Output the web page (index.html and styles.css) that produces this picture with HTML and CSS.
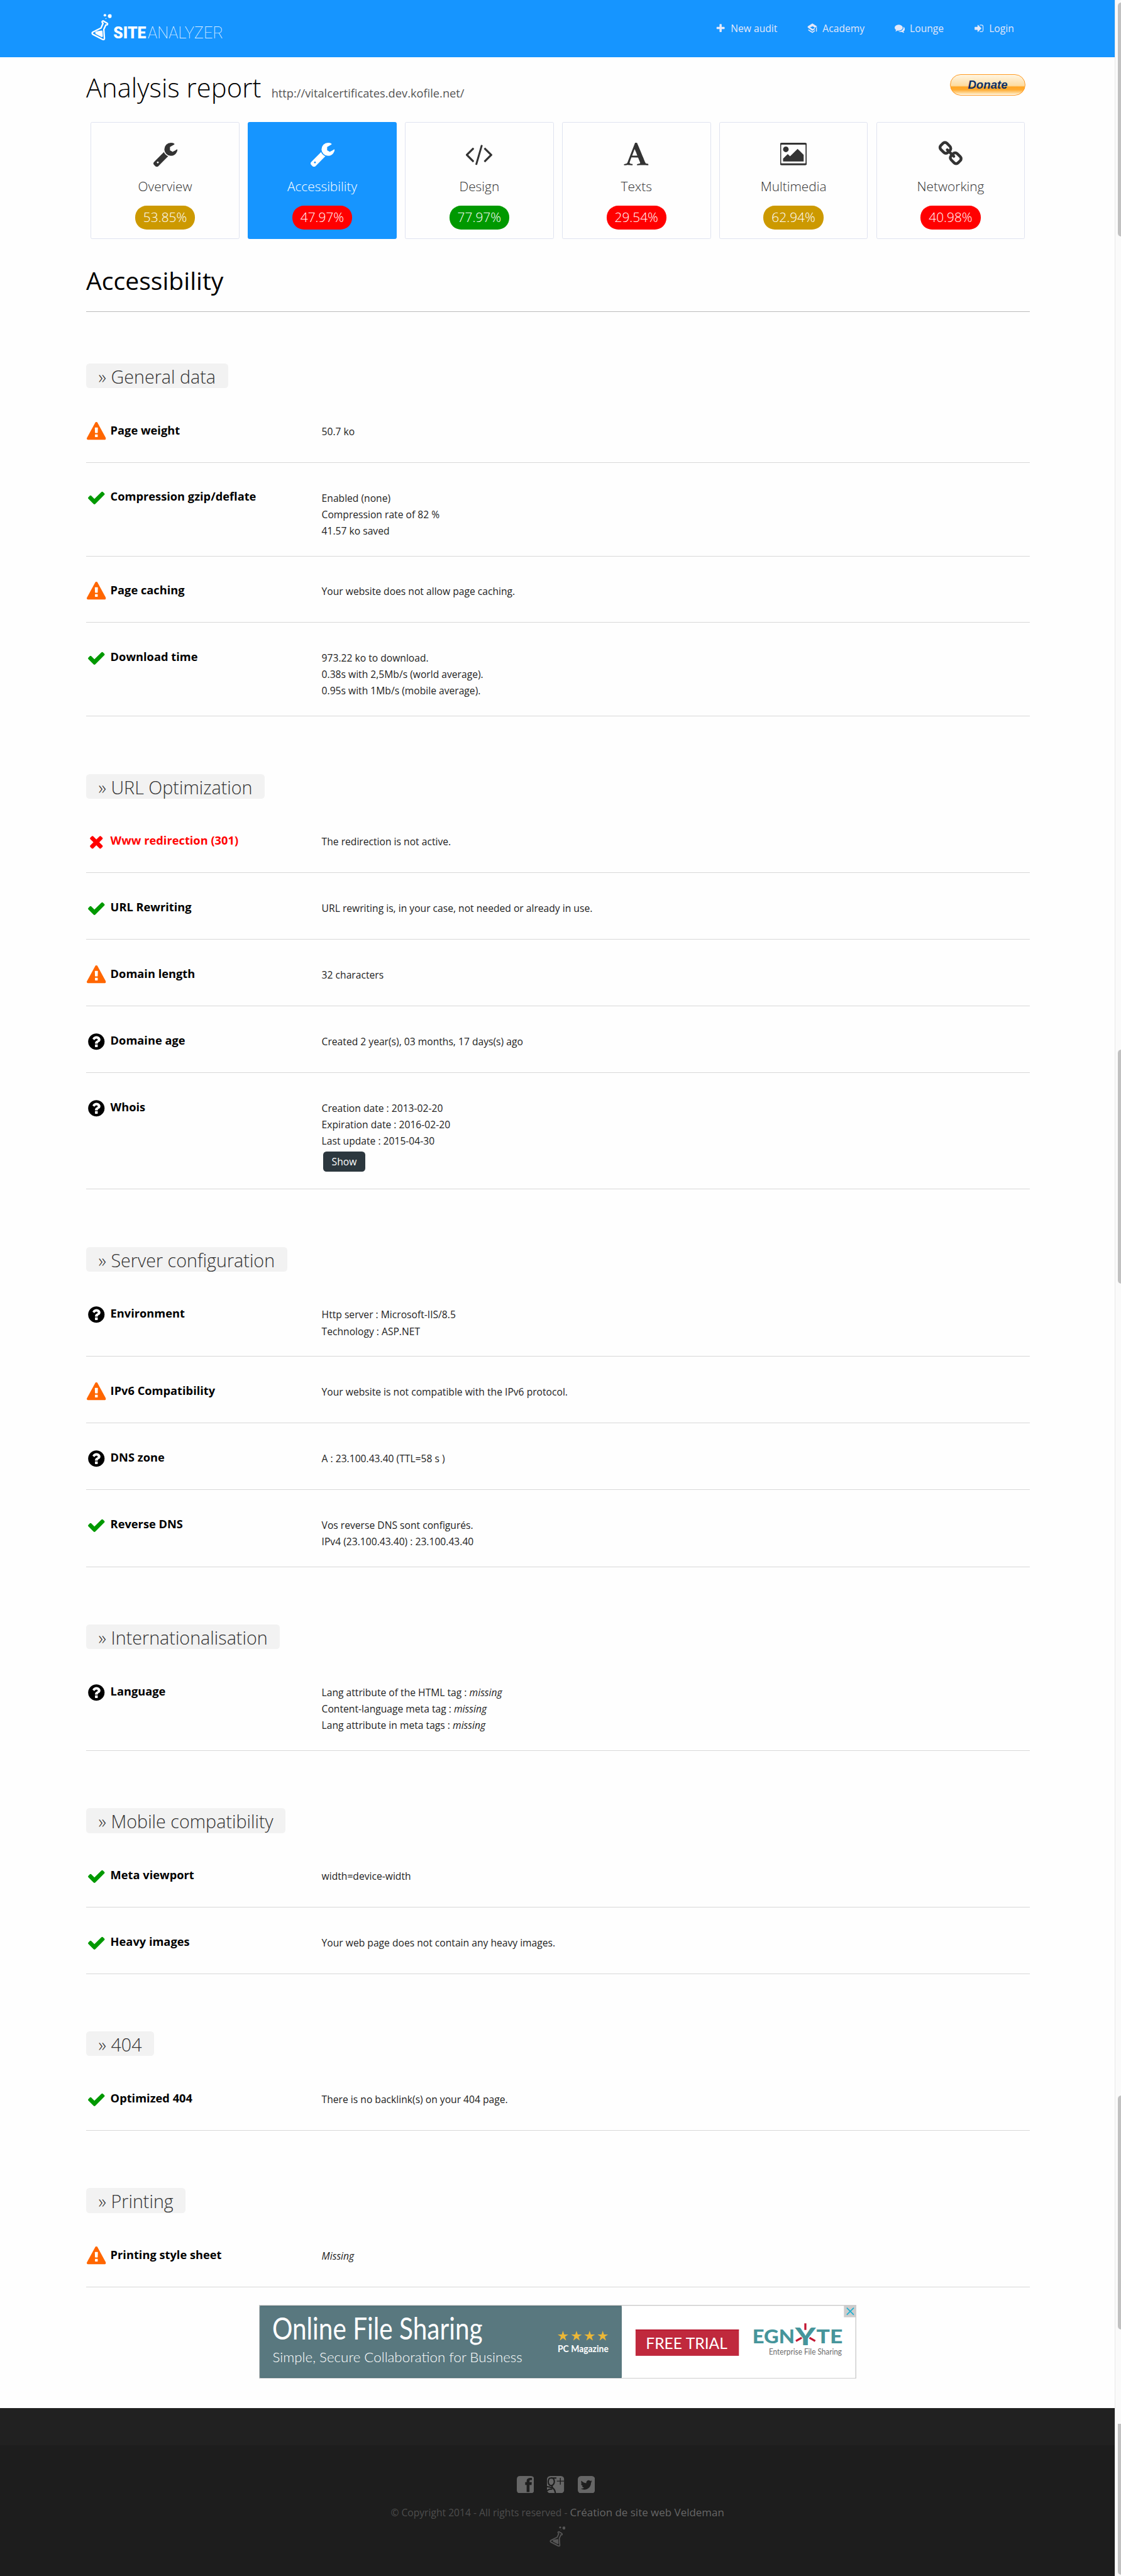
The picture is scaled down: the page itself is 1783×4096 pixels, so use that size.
FILE: index.html
```html
<!DOCTYPE html>
<html lang="en">
<head>
<meta charset="utf-8">
<title>Site Analyzer - Accessibility</title>
<link rel="stylesheet" href="styles.css">
</head>
<body>
<svg class="sprite" aria-hidden="true">
  <symbol id="wrench" viewBox="0 0 1792 1792"><path d="M448 1472q0-26-19-45t-45-19-45 19-19 45 19 45 45 19 45-19 19-45zm644-420l-682 682q-37 37-90 37-52 0-91-37l-106-108q-38-36-38-90 0-53 38-91l681-681q39 98 114.500 173.500t173.500 114.500zm634-435q0 39-23 106-47 134-164.500 217.500t-258.500 83.500q-185 0-316.500-131.500t-131.500-316.500 131.500-316.500 316.500-131.500q58 0 121.500 16.500t107.500 46.500q16 11 16 28t-16 28l-293 169v224l193 107q5-3 79-48.500t135.500-81 70.500-35.500q15 0 23.500 10t8.500 25z"/></symbol>
  <symbol id="code" viewBox="0 0 1792 1792" overflow="visible"><path d="M553 1399l-50 50q-10 10-23 10t-23-10l-466-466q-10-10-10-23t10-23l466-466q10-10 23-10t23 10l50 50q10 10 10 23t-10 23l-393 393 393 393q10 10 10 23t-10 23zm591-1067l-373 1291q-4 13-15.500 19.500t-23.500 2.500l-62-17q-13-4-19.500-15.500t-2.500-24.500l373-1291q4-13 15.500-19.500t23.500-2.500l62 17q13 4 19.500 15.500t2.500 24.500zm657 651l-466 466q-10 10-23 10t-23-10l-50-50q-10-10-10-23t10-23l393-393-393-393q-10-10-10-23t10-23l50-50q10-10 23-10t23 10l466 466q10 10 10 23t-10 23z"/></symbol>
  <symbol id="font" viewBox="0 0 1792 1792"><path d="M789 559l-170 450q33 0 136.500 2t160.500 2q19 0 57-2-87-253-184-452zm-725 1105l2-79q23-7 56-12.500t57-10.500 49.500-14.500 44.500-29 31-50.500l237-616 280-724h128q8 14 11 21l205 480q33 78 106 257.500t114 274.500q15 34 58 144.500t72 168.500q20 45 35 57 19 15 88 29.500t84 20.500q6 38 6 57 0 4-.5 13t-.5 13q-63 0-190-8t-191-8q-76 0-215 7t-178 8q0-43 4-78l131-28q1 0 12.500-2.500t15.500-3.500 14.500-4.500 15-6.500 11-8 9-11 2.500-14q0-16-31-96.500t-72-177.500-42-100l-450-2q-26 58-76.500 195.500t-50.500 162.500q0 22 14 37.500t43.500 24.500 48.500 13.500 57 8.500 41 4q1 19 1 58 0 9-2 27-58 0-174.500-10t-174.500-10q-8 0-26.500 4t-21.500 4q-80 14-188 14z"/></symbol>
  <symbol id="picture" viewBox="0 0 1792 1792" overflow="visible"><path d="M576 576q0 80-56 136t-136 56-136-56-56-136 56-136 136-56 136 56 56 136zm1024 384v448h-1408v-192l320-320 160 160 512-512zm96-704h-1600q-13 0-22.500 9.500t-9.500 22.500v1216q0 13 9.500 22.500t22.500 9.500h1600q13 0 22.500-9.500t9.500-22.500v-1216q0-13-9.500-22.500t-22.500-9.500zm160 32v1216q0 66-47 113t-113 47h-1600q-66 0-113-47t-47-113v-1216q0-66 47-113t113-47h1600q66 0 113 47t47 113z"/></symbol>
  <symbol id="link" viewBox="0 0 1792 1792"><path d="M1520 1216q0-40-28-68l-208-208q-28-28-68-28-42 0-72 32 3 3 19 18.500t21.500 21.500 15 19 13 25.500 3.500 27.500q0 40-28 68t-68 28q-15 0-27.500-3.500t-25.500-13-19-15-21.500-21.500-18.500-19q-33 31-33 73 0 40 28 68l206 207q27 27 68 27 40 0 68-26l147-146q28-28 28-67zm-703-705q0-40-28-68l-206-207q-28-28-68-28-39 0-68 27l-147 146q-28 28-28 67 0 40 28 68l208 208q27 27 68 27 42 0 72-31-3-3-19-18.500t-21.500-21.500-15-19-13-25.500-3.500-27.500q0-40 28-68t68-28q15 0 27.500 3.500t25.500 13 19 15 21.500 21.500 18.500 19q33-31 33-73zm895 705q0 120-85 203l-147 146q-83 83-203 83-121 0-204-85l-206-207q-83-83-83-203 0-123 88-209l-88-88q-86 88-208 88-120 0-204-84l-208-208q-84-84-84-204t85-203l147-146q83-83 203-83 121 0 204 85l206 207q83 83 83 203 0 123-88 209l88 88q86-88 208-88 120 0 204 84l208 208q84 84 84 204z"/></symbol>
  <symbol id="plus" viewBox="0 0 1792 1792"><path d="M1600 736v192q0 40-28 68t-68 28h-416v416q0 40-28 68t-68 28h-192q-40 0-68-28t-28-68v-416h-416q-40 0-68-28t-28-68v-192q0-40 28-68t68-28h416v-416q0-40 28-68t68-28h192q40 0 68 28t28 68v416h416q40 0 68 28t28 68z"/></symbol>
  <symbol id="academy" viewBox="0 0 48 48"><path d="M24 1L46 15 36 21 26 14 13 19 26 27 35 21 36 27 24 35 2 20V15z"/><path d="M5 28L24 40 36 32V37L24 46 5 34zM41 20L45 18V38L41 40z"/></symbol>
  <symbol id="comments" viewBox="0 0 1792 1792"><path d="M1408 768q0 139-94 257t-256.500 186.500-353.500 68.500q-86 0-176-16-124 88-278 128-36 9-86 16h-3q-11 0-20.500-8t-11.500-21q-1-3-1-6.500t.5-6.500 2-6l2.500-5 3.500-5.500 4-5 4.500-5 4-4.500q5-6 23-25t26-29.500 22.500-29 25-38.500 20.500-44q-124-72-195-177t-71-224q0-139 94-257t256.500-186.500 353.500-68.500 353.500 68.500 256.500 186.500 94 257zm384 256q0 120-71 224.500t-195 176.500q10 24 20.500 44t25 38.500 22.500 29 26 29.500 23 25q1 1 4 4.500t4.500 5 4 5 3.500 5.500l2.500 5 2 6 .5 6.500-1 6.500q-3 14-13 22t-22 7q-50-7-86-16-154-40-278-128-90 16-176 16-271 0-472-132 58 4 88 4 161 0 309-45t264-129q125-92 192-212t67-254q0-77-23-152 129 71 204 178t75 230z"/></symbol>
  <symbol id="signin" viewBox="0 0 1792 1792"><path d="M1312 896q0 26-19 45l-544 544q-19 19-45 19t-45-19-19-45v-288h-448q-26 0-45-19t-19-45v-384q0-26 19-45t45-19h448v-288q0-26 19-45t45-19 45 19l544 544q19 19 19 45zm352-352v704q0 119-84.500 203.500t-203.500 84.500h-320q-13 0-22.500-9.500t-9.500-22.500q0-4-1-20t-.5-26.500 3-23.500 10-19.500 20.500-6.500h320q66 0 113-47t47-113v-704q0-66-47-113t-113-47h-312l-11.500-1-11.500-3-8-5.500-7-9-2-13.500q0-4-1-20t-.5-26.500 3-23.500 10-19.500 20.500-6.500h320q119 0 203.500 84.500t84.500 203.500z"/></symbol>
  <symbol id="warn" viewBox="0 0 1792 1792"><path d="M1024 1375v-190q0-14-9.500-23.500t-22.500-9.500h-192q-13 0-22.500 9.500t-9.500 23.500v190q0 14 9.500 23.500t22.500 9.500h192q13 0 22.500-9.500t9.500-23.500zm-2-374l18-459q0-12-10-19-13-11-24-11h-220q-11 0-24 11-10 7-10 21l17 457q0 10 10 16.500t24 6.500h185q14 0 23.500-6.500t10.500-16.500zm-14-934l768 1408q35 63-2 126-17 29-46.500 46t-63.500 17h-1536q-34 0-63.500-17t-46.500-46q-37-63-2-126l768-1408q17-31 47-49t65-18 65 18 47 49z"/></symbol>
  <symbol id="ok" viewBox="0 0 1792 1792"><path d="M1671 566q0 40-28 68l-724 724-136 136q-28 28-68 28t-68-28l-136-136-362-362q-28-28-28-68t28-68l136-136q28-28 68-28t68 28l294 295 656-657q28-28 68-28t68 28l136 136q28 28 28 68z"/></symbol>
  <symbol id="bad" viewBox="0 0 1792 1792"><path d="M1490 1322q0 40-28 68l-136 136q-28 28-68 28t-68-28l-294-294-294 294q-28 28-68 28t-68-28l-136-136q-28-28-28-68t28-68l294-294-294-294q-28-28-28-68t28-68l136-136q28-28 68-28t68 28l294 294 294-294q28-28 68-28t68 28l136 136q28 28 28 68t-28 68l-294 294 294 294q28 28 28 68z"/></symbol>
  <symbol id="info" viewBox="0 0 1792 1792"><path d="M1024 1376v-192q0-14-9-23t-23-9h-192q-14 0-23 9t-9 23v192q0 14 9 23t23 9h192q14 0 23-9t9-23zm256-672q0-88-55.500-163t-138.500-116-170-41q-243 0-371 213-15 24 8 42l132 100q7 6 19 6 16 0 25-12 53-68 86-92 34-24 86-24 48 0 85.500 26t37.500 59q0 38-20 61t-68 45q-63 28-115.500 86.500t-52.500 125.500v36q0 14 9 23t23 9h192q14 0 23-9t9-23q0-19 21.500-49.500t54.500-49.500q32-18 49-28.500t46-35 44.500-48 28-60.500 12.500-81zm384 192q0 209-103 385.500t-279.500 279.500-385.500 103-385.500-103-279.500-279.500-103-385.500 103-385.500 279.500-279.500 385.500-103 385.500 103 279.500 279.500 103 385.500z"/></symbol>
  <symbol id="flask" viewBox="222 33 50 65">
    <path fill="none" stroke="currentColor" stroke-width="3.6" stroke-linejoin="round" stroke-linecap="round" d="M249.500 55L248.500 52.500Q249.500 49.500 252 50.500L260.500 55.500Q262.800 57 261.500 59.500L258.800 60M251 56L246 67.500 226 77.500Q222.500 80 226 83L250 95.500Q254.500 97 254.300 92.500L252.800 71 257.800 60"/>
    <path d="M233 76.500Q240 74 248.500 73.500 249.500 74 249.700 76L250.300 87Q250 90.500 247 89.200L233 82Q230.500 79 233 76.500z"/>
    <circle cx="255.500" cy="36.500" r="3.200"/><circle cx="267.500" cy="38.500" r="4.800"/><circle cx="258" cy="44.500" r="1.200"/>
  </symbol>
  <symbol id="facebook" viewBox="0 0 42 42"><path d="M8 0H34Q42 0 42 8V34Q42 42 34 42H8Q0 42 0 34V8Q0 0 8 0zM24 39H31V22H36L36.500 15H31V12Q31 10 33.500 10H37V4.500H32.500Q24 5 24 12V15H20.500V22H24z" fill-rule="evenodd"/></symbol>
  <symbol id="gplus" viewBox="0 0 42 42"><rect width="42" height="42" rx="8"/><g fill="none" stroke="#1d1d1d"><path stroke-width="2.200" d="M32.500 4.500V21M24 12.500H42"/><path stroke-width="3.200" d="M9 5Q17 3 18 14 17 23 10 23.500 3 22 3 13 4 5 9 5zM10 5H23M13 23Q11 27 15 30 20 34 20.500 42M0 26Q7 26 12 29M0 36Q5 31 13 32"/></g></symbol>
  <symbol id="twitter" viewBox="128 128 1536 1536"><path d="M1408 610q-56 25-121 34 68-40 93-117-65 38-134 51-61-66-153-66-87 0-148.500 61.500t-61.500 148.500q0 29 5 48-129-7-242-65t-192-155q-29 50-29 106 0 114 91 175-47-1-100-26v2q0 75 50 133.500t123 72.500q-29 8-51 8-13 0-39-4 21 63 74.500 104t121.500 42q-116 90-261 90-26 0-50-3 148 94 322 94 112 0 210-35.500t168-95 120.500-137 75-162 24.500-168.500q0-18-1-27 63-45 105-109zm256-194v960q0 119-84.500 203.500t-203.500 84.500h-960q-119 0-203.500-84.500t-84.500-203.500v-960q0-119 84.500-203.500t203.500-84.500h960q119 0 203.500 84.500t84.500 203.500z"/></symbol>
  <symbol id="star" viewBox="0 0 26 24"><path d="M13 0l3 9h10l-8 5.500 3 9.500-8-6-8 6 3-9.500L0 9h10z"/></symbol>
</svg>

<div class="shell">
<div class="page">
  <header class="topbar">
    <svg class="logo" viewBox="222 33 330 65">
      <use href="#flask" x="222" y="33" width="50" height="65"/>
      <text class="logo-bold" x="276" y="93" textLength="80" lengthAdjust="spacingAndGlyphs">SITE</text>
      <text class="logo-thin" x="360" y="93" textLength="184" lengthAdjust="spacingAndGlyphs">ANALYZER</text>
    </svg>
    <nav class="nav">
      <a><svg><use href="#plus"/></svg>New audit</a>
      <a><svg><use href="#academy"/></svg>Academy</a>
      <a><svg><use href="#comments"/></svg>Lounge</a>
      <a><svg><use href="#signin"/></svg>Login</a>
    </nav>
  </header>

  <main class="content">
    <div class="title">
      <h1>Analysis report</h1>
      <span class="url">http://vitalcertificates.dev.kofile.net/</span>
      <button class="donate">Donate</button>
    </div>

    <div class="tabs">
      <a class="tab"><svg><use href="#wrench"/></svg><span class="name">Overview</span><span class="score mid">53.85%</span></a>
      <a class="tab active"><svg><use href="#wrench"/></svg><span class="name">Accessibility</span><span class="score low">47.97%</span></a>
      <a class="tab"><svg><use href="#code"/></svg><span class="name">Design</span><span class="score high">77.97%</span></a>
      <a class="tab"><svg><use href="#font"/></svg><span class="name">Texts</span><span class="score low">29.54%</span></a>
      <a class="tab"><svg><use href="#picture"/></svg><span class="name">Multimedia</span><span class="score mid">62.94%</span></a>
      <a class="tab"><svg><use href="#link"/></svg><span class="name">Networking</span><span class="score low">40.98%</span></a>
    </div>

    <h2>Accessibility</h2>

    <section>
      <h3>» General data</h3>
      <div class="row"><svg class="warn"><use href="#warn"/></svg><h4>Page weight</h4><p>50.7 ko</p></div>
      <div class="row"><svg class="ok"><use href="#ok"/></svg><h4>Compression gzip/deflate</h4><p>Enabled (none)<br>Compression rate of 82 %<br>41.57 ko saved</p></div>
      <div class="row"><svg class="warn"><use href="#warn"/></svg><h4>Page caching</h4><p>Your website does not allow page caching.</p></div>
      <div class="row"><svg class="ok"><use href="#ok"/></svg><h4>Download time</h4><p>973.22 ko to download.<br>0.38s with 2,5Mb/s (world average).<br>0.95s with 1Mb/s (mobile average).</p></div>
    </section>

    <section>
      <h3>» URL Optimization</h3>
      <div class="row"><svg class="bad"><use href="#bad"/></svg><h4 class="bad">Www redirection (301)</h4><p>The redirection is not active.</p></div>
      <div class="row"><svg class="ok"><use href="#ok"/></svg><h4>URL Rewriting</h4><p>URL rewriting is, in your case, not needed or already in use.</p></div>
      <div class="row"><svg class="warn"><use href="#warn"/></svg><h4>Domain length</h4><p>32 characters</p></div>
      <div class="row"><svg><use href="#info"/></svg><h4>Domaine age</h4><p>Created 2 year(s), 03 months, 17 days(s) ago</p></div>
      <div class="row"><svg><use href="#info"/></svg><h4>Whois</h4><div><p>Creation date : 2013-02-20<br>Expiration date : 2016-02-20<br>Last update : 2015-04-30</p><button class="show">Show</button></div></div>
    </section>

    <section>
      <h3>» Server configuration</h3>
      <div class="row"><svg><use href="#info"/></svg><h4>Environment</h4><p>Http server : Microsoft-IIS/8.5<br>Technology : ASP.NET</p></div>
      <div class="row"><svg class="warn"><use href="#warn"/></svg><h4>IPv6 Compatibility</h4><p>Your website is not compatible with the IPv6 protocol.</p></div>
      <div class="row"><svg><use href="#info"/></svg><h4>DNS zone</h4><p>A : 23.100.43.40 (TTL=58 s )</p></div>
      <div class="row"><svg class="ok"><use href="#ok"/></svg><h4>Reverse DNS</h4><p>Vos reverse DNS sont configurés.<br>IPv4 (23.100.43.40) : 23.100.43.40</p></div>
    </section>

    <section>
      <h3>» Internationalisation</h3>
      <div class="row"><svg><use href="#info"/></svg><h4>Language</h4><p>Lang attribute of the HTML tag : <i>missing</i><br>Content-language meta tag : <i>missing</i><br>Lang attribute in meta tags : <i>missing</i></p></div>
    </section>

    <section>
      <h3>» Mobile compatibility</h3>
      <div class="row"><svg class="ok"><use href="#ok"/></svg><h4>Meta viewport</h4><p>width=device-width</p></div>
      <div class="row"><svg class="ok"><use href="#ok"/></svg><h4>Heavy images</h4><p>Your web page does not contain any heavy images.</p></div>
    </section>

    <section>
      <h3>» 404</h3>
      <div class="row"><svg class="ok"><use href="#ok"/></svg><h4>Optimized 404</h4><p>There is no backlink(s) on your 404 page.</p></div>
    </section>

    <section>
      <h3>» Printing</h3>
      <div class="row"><svg class="warn"><use href="#warn"/></svg><h4>Printing style sheet</h4><p><i>Missing</i></p></div>
    </section>

    <svg class="banner" viewBox="0 0 1456 180">
      <rect width="1456" height="180" fill="#c8c8c8"/>
      <rect x="884" y="2" width="570" height="176" fill="#fff"/>
      <rect x="2" y="2" width="882" height="176" fill="#4a6b73"/>
      <rect x="2" y="5" width="882" height="171" fill="#59787f"/>
      <g font-family="Lato, sans-serif">
        <text x="32" y="85" font-size="73" fill="#fff" textLength="513" lengthAdjust="spacingAndGlyphs">Online File Sharing</text>
        <text x="33" y="140" font-size="34" font-weight="300" fill="#fff" textLength="609" lengthAdjust="spacingAndGlyphs">Simple, Secure Collaboration for Business</text>
        <text x="728" y="115" font-size="24" font-weight="700" fill="#fff" textLength="124" lengthAdjust="spacingAndGlyphs">PC Magazine</text>
        <rect x="918" y="60" width="252" height="64" fill="#c0293d"/>
        <rect x="918" y="60" width="252" height="2" fill="#b5122a"/>
        <text x="943" y="107" font-size="39" fill="#fff" textLength="199" lengthAdjust="spacingAndGlyphs">FREE TRIAL</text>
        <g fill="#46959b" font-weight="900">
          <text x="1203" y="94" font-size="47" textLength="103" lengthAdjust="spacingAndGlyphs">EGN</text>
          <text x="1307" y="98" font-size="59" textLength="50" lengthAdjust="spacingAndGlyphs">Y</text>
          <text x="1359" y="94" font-size="47" textLength="64" lengthAdjust="spacingAndGlyphs">TE</text>
        </g>
        <text x="1243" y="121" font-size="20" fill="#6d6d6d" textLength="178" lengthAdjust="spacingAndGlyphs">Enterprise File Sharing</text>
      </g>
      <path d="M1332 45V61M1309 88L1323 80M1342 80L1356 88" stroke="#c21531" stroke-width="5"/>
      <g fill="#ebb737"><use href="#star" x="728" y="63" width="26" height="24"/><use href="#star" x="761" y="63" width="26" height="24"/><use href="#star" x="793" y="63" width="26" height="24"/><use href="#star" x="825" y="63" width="26" height="24"/></g>
      <rect x="1426" width="30" height="30" fill="#ccc"/>
      <path d="M1433 7L1450 24M1450 7L1433 24" stroke="#19b0d2" stroke-width="2.500"/>
    </svg>
  </main>

  <footer class="footer">
    <div class="strip"></div>
    <div class="social"><svg><use href="#facebook"/></svg><svg><use href="#gplus"/></svg><svg><use href="#twitter"/></svg></div>
    <p class="copy">© Copyright 2014 - All rights reserved - <a>Création de site web Veldeman</a></p>
    <svg class="mark"><use href="#flask"/></svg>
  </footer>
</div>

<aside class="scrollbar">
  <i class="thumb first"></i><i class="thumb second"></i><i class="thumb third"></i><i class="thumb last"></i>
</aside>
</div>
</body>
</html>
```

FILE: styles.css
```css
/* 1rem is ten layout units; the whole page scales from here */
html { font-size: 13.048px; }
* { box-sizing: border-box; margin: 0; padding: 0; }
body {
  font-family: "Open Sans", sans-serif;
  background: #fefefe;
  color: #222;
  font-size: 1.2rem;
}
svg { display: block; fill: currentColor; flex: none; }
.sprite { position: absolute; width: 0; height: 0; }
.shell { display: flex; height: 4096px; overflow: hidden; }
.page { width: 135.9rem; display: flex; flex-direction: column; flex: none; }

.topbar {
  height: 7rem;
  background: #1695ff;
  display: flex;
  justify-content: space-between;
  align-items: flex-start;
  padding: 0 12.3rem 0 11.1rem;
}
.logo { width: 16.5rem; height: 3.25rem; margin-top: 1.65rem; color: #fff; overflow: visible; }
.logo-bold { font: 900 40px Roboto, sans-serif; }
.logo-thin { font: 100 40px Roboto, sans-serif; }
.nav { display: flex; gap: 3.67rem; margin-top: 2.45rem; color: #e3e7f8; line-height: 2rem; }
.nav a { display: flex; align-items: center; gap: .6rem; }
.nav svg { width: 1.25rem; height: 1.25rem; }

.content { padding: 0 10.4rem 0 10.5rem; display: flex; flex-direction: column; }
.title { height: 7.9rem; display: flex; align-items: baseline; padding-top: 1.45rem; }
h1 { font-weight: 300; font-size: 3.2rem; line-height: 4.4rem; color: #000; }
.url { font-size: 1.4rem; color: #555; margin-left: 1.25rem; }
.donate {
  align-self: flex-start;
  margin: .6rem .5rem 0 auto;
  width: 9.2rem;
  height: 2.6rem;
  border: 1px solid #ff9a22;
  border-radius: 1.3rem;
  background: linear-gradient(#fff5e2 0, #fddca0 54%, #ffa726 60%, #ffab30 74%, #ffe3b0 94%, #fff 100%);
  font: italic bold 1.43rem "Liberation Sans", sans-serif;
  color: #0a2f66;
}

.tabs { display: grid; grid-template-columns: repeat(6, 1fr); gap: 1rem; padding: 0 .55rem; }
.tab {
  height: 14.2rem;
  border: 1px solid #dfe3f0;
  border-radius: .2rem;
  display: flex;
  flex-direction: column;
  align-items: center;
  color: #333;
  font-weight: 300;
  font-size: 1.6rem;
  padding-top: 2.17rem;
}
.tab.active { background: #1695ff; border-color: #1695ff; color: #fff; }
.tab svg { width: 3.2rem; height: 3.2rem; }
.name { line-height: 2.2rem; margin-top: 1.23rem; }
.score {
  margin-top: 1.3rem;
  width: 7.3rem;
  height: 2.9rem;
  line-height: 2.9rem;
  border-radius: 1.4rem;
  text-align: center;
  color: #fff;
}
.mid { background: #c90; }
.low { background: #f00; }
.high { background: #090; }

h2 {
  height: 8.9rem;
  border-bottom: 1px solid #bbb;
  font-weight: 400;
  font-size: 3rem;
  line-height: 4rem;
  padding-top: 3.08rem;
  color: #000;
}

section { padding-top: 7rem; }
h2 + section { padding-top: 6.3rem; }
h3 {
  width: fit-content;
  height: 3rem;
  margin-bottom: .98rem;
  padding: 0 1.5rem;
  background: #f2f2f2;
  border-radius: .4rem;
  font-weight: 300;
  font-size: 2.2rem;
  line-height: 3.23rem;
  color: #333;
}
.row {
  display: flex;
  align-items: flex-start;
  min-height: 8.11rem;
  border-bottom: 1px solid #d8d8d8;
  padding: 3.12rem 0 2.06rem .1rem;
}
.row svg { width: 2.34rem; height: 2.34rem; margin-right: .52rem; color: #000; }
.row .warn { color: #f60; }
.row .ok { color: #090; }
.row .bad { color: #f00; }
h4 { width: 25.75rem; font-weight: 700; font-size: 1.4rem; line-height: 2rem; color: #000; flex: none; }
.row p { line-height: 2rem; padding-top: .16rem; font-size: 1.2rem; }
.show {
  display: block;
  width: 5.1rem;
  height: 2.4rem;
  margin: .33rem 0 .07rem .2rem;
  border: 0;
  border-radius: .4rem;
  background: #2c373e;
  color: #fff;
  font: 1.2rem "Open Sans", sans-serif;
}

.banner { width: 72.8rem; height: 9rem; margin: 2.1rem auto 0; }

.footer {
  margin-top: 3.6rem;
  flex: 1;
  background: #1d1d1d;
  display: flex;
  flex-direction: column;
  align-items: center;
  color: #666;
}
.strip { width: 100%; height: 4.55rem; background: #212121; }
.social { display: flex; gap: 1.6rem; margin: 3.7rem .4rem 0 0; }
.social svg { width: 2.1rem; height: 2.1rem; }
.copy { margin-top: 1.4rem; line-height: 2rem; color: #4d4d4d; font-size: 1.2rem; }
.copy a { color: #666; font-size: 1.3rem; }
.mark { width: 1.95rem; height: 2.5rem; margin-top: .7rem; color: #555; }

.scrollbar {
  width: .75rem;
  flex: none;
  display: flex;
  flex-direction: column;
  background: #fafafa;
  border-left: 1px solid #e7e7e7;
  padding-left: .3rem;
  overflow: hidden;
}
.thumb { flex: none; width: .8rem; height: 28.5rem; background: #c1c1c1; border-radius: .4rem; }
.first { margin-top: .3rem; }
.second { margin-top: 99.1rem; }
.third { margin-top: 99rem; }
.last { margin-top: 11.45rem; height: 18.4rem; border-radius: 0 0 .4rem .4rem; }
```
